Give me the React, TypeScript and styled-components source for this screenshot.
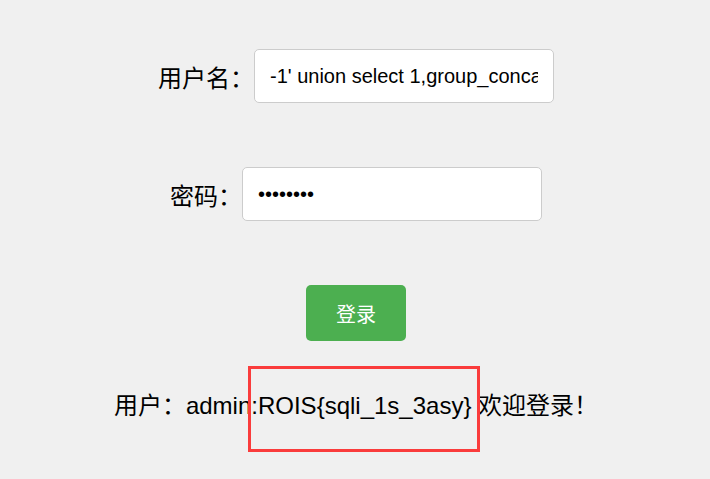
import React from "react";
import styled, { createGlobalStyle } from "styled-components";

const Global = createGlobalStyle`
  html, body { margin: 0; padding: 0; background: #f0f0f0; overflow: hidden; }
  body { font-family: "Liberation Sans", Arial, "Noto Sans CJK SC", sans-serif; color: #000; }
`;

const Page = styled.div`
  width: 710px;
  height: 479px;
  display: flex;
  flex-direction: column;
  align-items: center;
  padding: 49px 0 0 2px;
  box-sizing: border-box;
`;

const Row = styled.div`
  display: flex;
  align-items: center;
  margin-bottom: 64px;
`;

const Label = styled.label`
  font-size: 24px;
`;

const Input = styled.input`
  width: 300px;
  height: 54px;
  box-sizing: border-box;
  border: 1px solid #ccc;
  border-radius: 5px;
  background: #fff;
  padding: 0 15px;
  font-family: "Liberation Sans", Arial, sans-serif;
  font-size: 20px;
  color: #000;
  outline: none;
`;

const Button = styled.button`
  width: 100px;
  height: 56px;
  border: none;
  border-radius: 5px;
  background: #4caf50;
  color: #fff;
  font-family: "Liberation Sans", Arial, "Noto Sans CJK SC", sans-serif;
  font-size: 20px;
  margin-bottom: 50px;
  padding: 0;
`;

const Result = styled.div`
  position: relative;
  font-size: 24px;
  line-height: 30px;
  white-space: nowrap;
`;

const Highlight = styled.div`
  position: absolute;
  left: 134px;
  top: -25px;
  width: 232px;
  height: 86px;
  box-sizing: border-box;
  border: 3px solid #fa3c3c;
`;

export default function App() {
  return (
    <Page>
      <Global />
      <Row>
        <Label>用户名：</Label>
        <Input type="text" defaultValue="-1' union select 1,group_concat(username,0x3a,password) from users#" />
      </Row>
      <Row>
        <Label>密码：</Label>
        <Input type="password" defaultValue="12345678" />
      </Row>
      <Button>登录</Button>
      <Result>
        用户：admin:ROIS{"{"}sqli_1s_3asy{"}"} 欢迎登录！
        <Highlight />
      </Result>
    </Page>
  );
}
